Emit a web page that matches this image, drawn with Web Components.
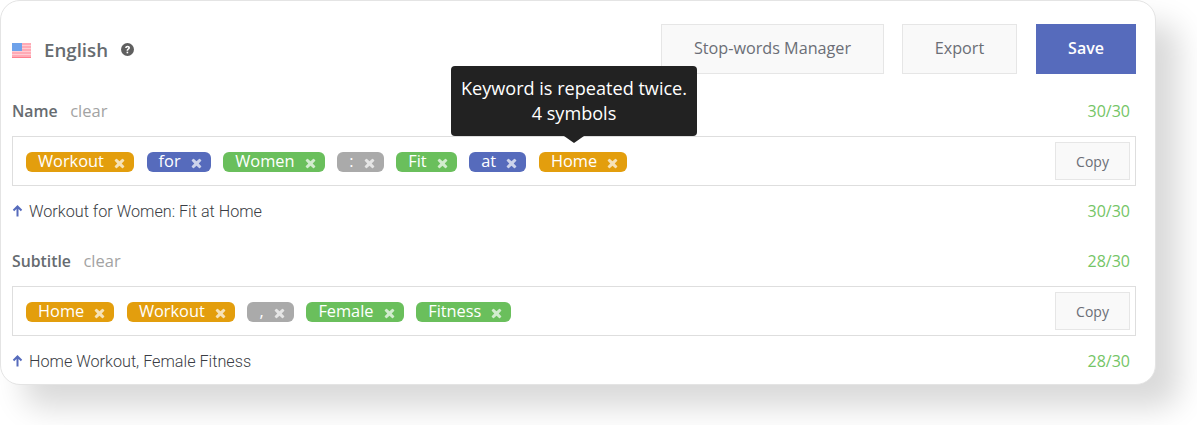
<!DOCTYPE html>
<html lang="en">
<head>
<meta charset="utf-8">
<title>Keywords</title>
<style>
  html, body { margin: 0; padding: 0; background: #fff; }
  body { font-family: "Open Sans", sans-serif; width: 1197px; height: 425px; overflow: hidden; }
</style>
</head>
<body>
<kw-card>
  <kw-header></kw-header>
  <kw-section label="Name" count="30/30" preview="Workout for Women: Fit at Home">
    <kw-tag color="orange">Workout</kw-tag>
    <kw-tag color="blue">for</kw-tag>
    <kw-tag color="green">Women</kw-tag>
    <kw-tag color="gray">:</kw-tag>
    <kw-tag color="green">Fit</kw-tag>
    <kw-tag color="blue">at</kw-tag>
    <kw-tag color="orange" tooltip>Home</kw-tag>
  </kw-section>
  <kw-section label="Subtitle" count="28/30" preview="Home Workout, Female Fitness">
    <kw-tag color="orange">Home</kw-tag>
    <kw-tag color="orange">Workout</kw-tag>
    <kw-tag color="gray">,</kw-tag>
    <kw-tag color="green">Female</kw-tag>
    <kw-tag color="green">Fitness</kw-tag>
  </kw-section>
</kw-card>

<script>
(function() {
  function define(name, css, html) {
    class El extends HTMLElement {
      constructor() {
        super();
        const root = this.attachShadow({ mode: 'open' });
        root.innerHTML = `<style>${css}</style>${typeof html === 'function' ? html(this) : html}`;
      }
    }
    customElements.define(name, El);
  }

  define('kw-button', `
    :host { display: inline-flex; }
    button {
      box-sizing: border-box; width: var(--w, 100px); height: var(--h, 50px); margin: 0;
      padding: 0 0 var(--pb, 0);
      border: 1px solid #e6e6e6; background: #f9f9f9; color: #6b6e76;
      font: 16.2px "Open Sans", sans-serif; cursor: pointer;
    }
    :host([primary]) button { background: #566bbc; border-color: #566bbc; color: #fff; font-weight: 600; font-size: 16px; }
    :host([small]) button { font-size: 14px; }
  `, `<button><slot></slot></button>`);

  define('kw-header', `
    :host { display: flex; align-items: center; height: 50px; margin-bottom: 12px; }
    svg.flag { width: 19px; height: 15px; margin-right: 13px; filter: blur(.7px); position: relative; top: 1px; }
    .lang { font-size: 18.7px; font-weight: 600; color: #666b70; line-height: 50px; position: relative; top: 1px; }
    svg.help { width: 13px; height: 13px; margin-left: 13px; }
    .actions { margin-left: auto; display: flex; gap: 18px; --pb: 2px; }
    kw-button.sw { --w: 223px; }
    kw-button.ex { --w: 115px; }
    kw-button.sv { --w: 100px; margin-left: 1px; }
  `, `
    <svg class="flag" viewBox="0 0 19 15">
      <rect width="19" height="15" fill="#ffaab5"/>
      <g fill="#ffcdd3"><rect y="2" width="19" height="1"/><rect y="5" width="19" height="1"/><rect y="8" width="19" height="1"/><rect y="11" width="19" height="1"/></g>
      <rect y="14" width="19" height="1" fill="#ff7f8e"/>
      <rect width="10" height="8" fill="#6ea2ea"/>
    </svg>
    <span class="lang">English</span>
    <svg class="help" viewBox="0 0 24 24">
      <circle cx="12" cy="12" r="12" fill="#5f5f5f"/>
      <path d="M7.6 9.2C7.8 6.6 9.6 5 12.2 5c2.6 0 4.4 1.6 4.4 3.8 0 1.7-.9 2.6-2.1 3.4-.9.6-1.2 1-1.2 1.8v.5h-3v-.8c0-1.5.6-2.3 1.8-3.1.9-.6 1.4-1 1.4-1.7 0-.7-.6-1.2-1.4-1.2-.9 0-1.5.6-1.6 1.5z" fill="#fff"/>
      <rect x="10.3" y="16" width="3" height="3" fill="#fff"/>
    </svg>
    <div class="actions">
      <kw-button class="sw">Stop-words Manager</kw-button>
      <kw-button class="ex">Export</kw-button>
      <kw-button class="sv" primary>Save</kw-button>
    </div>
  `);

  define('kw-tag', `
    :host {
      display: inline-flex; align-items: center; height: 20px; box-sizing: border-box;
      padding: 0 9px 2px 12px; border-radius: 6px; position: relative;
      color: #fff; font: 16.35px/18px "Open Sans", sans-serif; background: var(--tag);
    }
    :host([color=orange]) { --tag: #e39e0d; }
    :host([color=blue]) { --tag: #566bbc; }
    :host([color=green]) { --tag: #6abf5c; }
    :host([color=gray]) { --tag: #aaaaaa; }
    svg { width: 11px; height: 11px; margin-left: 10px; opacity: .7; position: relative; top: 2px; }
    .tip {
      position: absolute; left: calc(50% - 9px); bottom: 100%; margin-bottom: 16px; transform: translateX(-50%);
      box-sizing: border-box; width: 246px; height: 70px; padding: 10px 0;
      background: #222; border-radius: 4px; color: #fff; text-align: center;
      font: 18.1px/25px "Open Sans", sans-serif; white-space: nowrap;
    }
    .tip::after {
      content: ""; position: absolute; left: 50%; top: 100%; margin-left: -10px;
      border: 10px solid transparent; border-bottom: 0; border-top: 7px solid #222;
    }
  `, el => `
    <slot></slot>
    <svg viewBox="0 0 11 11"><path d="M3 .9 5.5 3.3 8 .9a.7.7 0 0 1 1 0l1.1 1.1a.7.7 0 0 1 0 1L7.7 5.5l2.4 2.5a.7.7 0 0 1 0 1L9 10.1a.7.7 0 0 1-1 0L5.5 7.7 3 10.1a.7.7 0 0 1-1 0L.9 9a.7.7 0 0 1 0-1l2.4-2.5L.9 3a.7.7 0 0 1 0-1L2 .9a.7.7 0 0 1 1 0z" fill="#fff"/></svg>
    ${el.hasAttribute('tooltip') ? '<div class="tip">Keyword is repeated twice.<br>4 symbols</div>' : ''}
  `);

  define('kw-section', `
    :host { display: block; }
    .head, .foot { display: flex; align-items: center; height: 50px; }
    .head b { font-size: 15.8px; font-weight: 600; color: #666b70; }
    .head a { font-size: 16.5px; color: #a3a3a3; margin-left: 12.5px; position: relative; top: -.5px; }
    .count { margin-left: auto; margin-right: 6px; font: 16px "Open Sans", sans-serif; color: #74c566; }
    .box {
      box-sizing: border-box; height: 50px; border: 1px solid #dedede;
      display: flex; align-items: center; padding: 0 5px 0 13px;
    }
    .tags { display: flex; gap: 12.7px; flex: 1; margin-top: 2px; }
    kw-button { --w: 75px; --h: 38px; }
    .foot span:first-of-type { color: #3a3d44; font: 300 16.2px Roboto, sans-serif; }
    .foot svg { width: 11px; height: 12px; margin-right: 6px; }
  `, el => `
    <div class="head"><b>${el.getAttribute('label')}</b><a>clear</a><span class="count">${el.getAttribute('count')}</span></div>
    <div class="box"><div class="tags"><slot></slot></div><kw-button small>Copy</kw-button></div>
    <div class="foot">
      <svg viewBox="0 0 11 12"><path d="M5.5 11.5V2M1.5 5.5 5.5 1.5l4 4" fill="none" stroke="#566bbc" stroke-width="2"/></svg>
      <span>${el.getAttribute('preview')}</span><span class="count">${el.getAttribute('count')}</span>
    </div>
  `);

  define('kw-card', `
    :host {
      display: block; box-sizing: border-box; width: 1156px; height: 385px;
      padding: 23px 19px 0 11px; background: #fff;
      border: 1px solid #e4e4e4; border-radius: 20px;
      box-shadow: 23px 23px 30px rgba(0, 0, 0, .15);
    }
  `, `<slot></slot>`);
})();
</script>
</body>
</html>
